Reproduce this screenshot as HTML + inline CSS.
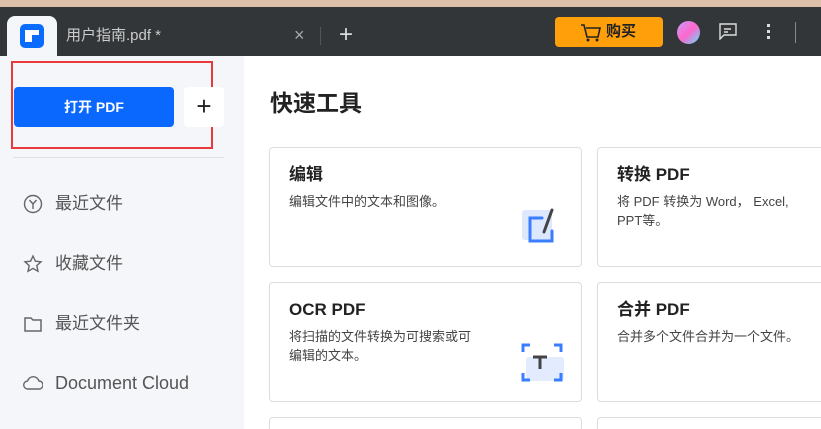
<!DOCTYPE html>
<html><head><meta charset="utf-8"><style>
*{margin:0;padding:0;box-sizing:border-box}
html,body{width:821px;height:429px;overflow:hidden}
body{font-family:"Liberation Sans","Noto Sans CJK SC",sans-serif;background:#fff;position:relative}
.abs{position:absolute;line-height:1.2}
.top{left:0;top:0;width:821px;height:7px;background:#dcc0aa}
.bar{left:0;top:7px;width:821px;height:49px;background:#323639}
.tab{left:7px;top:16px;width:50px;height:40px;background:#f5f6fa;border-radius:8px 8px 0 0}
.side{left:0;top:56px;width:244px;height:373px;background:#f5f6fa}
.card{border:1px solid #dcdde0;border-radius:4px;background:#fff}
.card h3{position:absolute;left:19px;top:16px;height:22px;line-height:22px;font-size:17px;font-weight:bold;color:#222}
.card p{position:absolute;left:19px;top:44px;font-size:13px;color:#444;line-height:19px}
.nav{left:23px;font-size:17px;color:#555;display:flex;align-items:center;height:24px;line-height:24px}
.nav svg{margin-right:12px}
</style></head><body>
<div class="abs top"></div>
<div class="abs bar"></div>
<div class="abs tab"></div>
<div class="abs" style="left:20px;top:24px;width:24px;height:24px;background:#0a6cff;border-radius:5px"></div>
<div class="abs" style="left:25px;top:30px;width:14px;height:5px;background:#fff"></div>
<div class="abs" style="left:25px;top:35px;width:7px;height:7px;background:#fff"></div>
<div class="abs" style="left:66px;top:26px;font-size:15px;color:#ccc;line-height:20px;height:20px">用户指南.pdf *</div>
<div class="abs" style="left:294px;top:25px;font-size:18px;color:#aaa">×</div>
<div class="abs" style="left:320px;top:27px;width:1px;height:18px;background:#555"></div>
<div class="abs" style="left:339px;top:21px;font-size:24px;color:#ddd;font-weight:300">+</div>
<div class="abs" style="left:555px;top:17px;width:108px;height:30px;background:#ff9f0a;border-radius:4px"></div>
<svg class="abs" style="left:580px;top:23px" width="22" height="20" viewBox="0 0 22 20"><path d="M1 2h3l3 12h11l2-9H6" fill="none" stroke="#222" stroke-width="1.6"/><circle cx="8" cy="17" r="1.5" fill="#222"/><circle cx="17" cy="17" r="1.5" fill="#222"/></svg>
<div class="abs" style="left:606px;top:22px;font-size:15px;color:#222;font-weight:bold;line-height:20px;height:20px">购买</div>
<div class="abs" style="left:677px;top:21px;width:23px;height:23px;border-radius:50%;background:linear-gradient(135deg,#c6a0ff,#ff66cc 50%,#5ee0ff)"></div>
<svg class="abs" style="left:718px;top:22px" width="20" height="18"><path d="M2 2h16v11H6l-4 4z" fill="none" stroke="#ddd" stroke-width="1.4"/><path d="M6 7h7M6 10h4" stroke="#ddd" stroke-width="1.4"/></svg>
<div class="abs" style="left:767px;top:24px;width:3px;height:3px;background:#ddd;box-shadow:0 6px #ddd,0 12px #ddd"></div>
<div class="abs" style="left:795px;top:22px;width:1px;height:21px;background:#888"></div>
<div class="abs side"></div>
<div class="abs" style="left:11px;top:61px;width:202px;height:88px;border:2px solid #e83a3a"></div>
<div class="abs" style="left:14px;top:87px;width:160px;height:40px;background:#0a68ff;border-radius:4px;color:#fff;font-weight:bold;font-size:14px;text-align:center;line-height:40px">打开 PDF</div>
<div class="abs" style="left:184px;top:87px;width:40px;height:40px;background:#fff;border-radius:4px;font-size:26px;text-align:center;line-height:38px;color:#222">+</div>
<div class="abs" style="left:13px;top:157px;width:211px;height:1px;background:#dfe0e4"></div>
<div class="abs nav" style="top:192px"><svg width="20" height="20"><circle cx="10" cy="10" r="8.5" fill="none" stroke="#666" stroke-width="1.4"/><path d="M6.5 6l3.5 4 3.5-4M10 10v5" fill="none" stroke="#666" stroke-width="1.4"/></svg>最近文件</div>
<div class="abs nav" style="top:252px"><svg width="20" height="20"><path d="M10 2l2.4 5.2 5.6.6-4.2 3.8 1.2 5.6L10 14.4 5 17.2l1.2-5.6L2 7.8l5.6-.6z" fill="none" stroke="#666" stroke-width="1.4"/></svg>收藏文件</div>
<div class="abs nav" style="top:312px"><svg width="20" height="20"><path d="M2 4h6l2 2h8v11H2z" fill="none" stroke="#666" stroke-width="1.5"/></svg>最近文件夹</div>
<div class="abs nav" style="top:371px;font-size:18px"><svg width="20" height="20"><path d="M5 16a4 4 0 0 1-.5-8A6 6 0 0 1 16 8a4 4 0 0 1 0 8z" fill="none" stroke="#666" stroke-width="1.4"/></svg>Document Cloud</div>
<div class="abs" style="left:270px;top:88px;font-size:23px;font-weight:bold;color:#222;line-height:30px;height:30px">快速工具</div>
<div class="abs card" style="left:269px;top:147px;width:313px;height:120px"><h3>编辑</h3><p>编辑文件中的文本和图像。</p>
<svg class="abs" style="left:250px;top:58px" width="44" height="44"><rect x="2" y="4" width="30" height="30" rx="3" fill="#dde8ff"/><path d="M22 12H10v23h22V25" fill="none" stroke="#3b7dff" stroke-width="3" stroke-linecap="round"/><path d="M24 26l8-22" stroke="#444" stroke-width="3" stroke-linecap="round"/></svg></div>
<div class="abs card" style="left:597px;top:147px;width:224px;height:120px;border-right:none;border-radius:4px 0 0 4px"><h3>转换 PDF</h3><p>将 PDF 转换为 Word， Excel,<br>PPT等。</p></div>
<div class="abs card" style="left:269px;top:282px;width:313px;height:120px"><h3>OCR PDF</h3><p>将扫描的文件转换为可搜索或可<br>编辑的文本。</p>
<svg class="abs" style="left:250px;top:57px" width="44" height="44"><rect x="6" y="17" width="38" height="24" rx="3" fill="#e3ebff"/><path d="M3 12V5h7M34 5h7v7M3 33v7h7M41 33v7h-7" fill="none" stroke="#3b7dff" stroke-width="3"/><path d="M13 17h14M20 17v12" stroke="#444" stroke-width="3"/></svg></div>
<div class="abs card" style="left:597px;top:282px;width:224px;height:120px;border-right:none;border-radius:4px 0 0 4px"><h3>合并 PDF</h3><p>合并多个文件合并为一个文件。</p></div>
<div class="abs card" style="left:269px;top:417px;width:313px;height:12px;border-bottom:none;border-radius:4px 4px 0 0"></div>
<div class="abs card" style="left:597px;top:417px;width:224px;height:12px;border-bottom:none;border-right:none;border-radius:4px 0 0 0"></div>
</body></html>
